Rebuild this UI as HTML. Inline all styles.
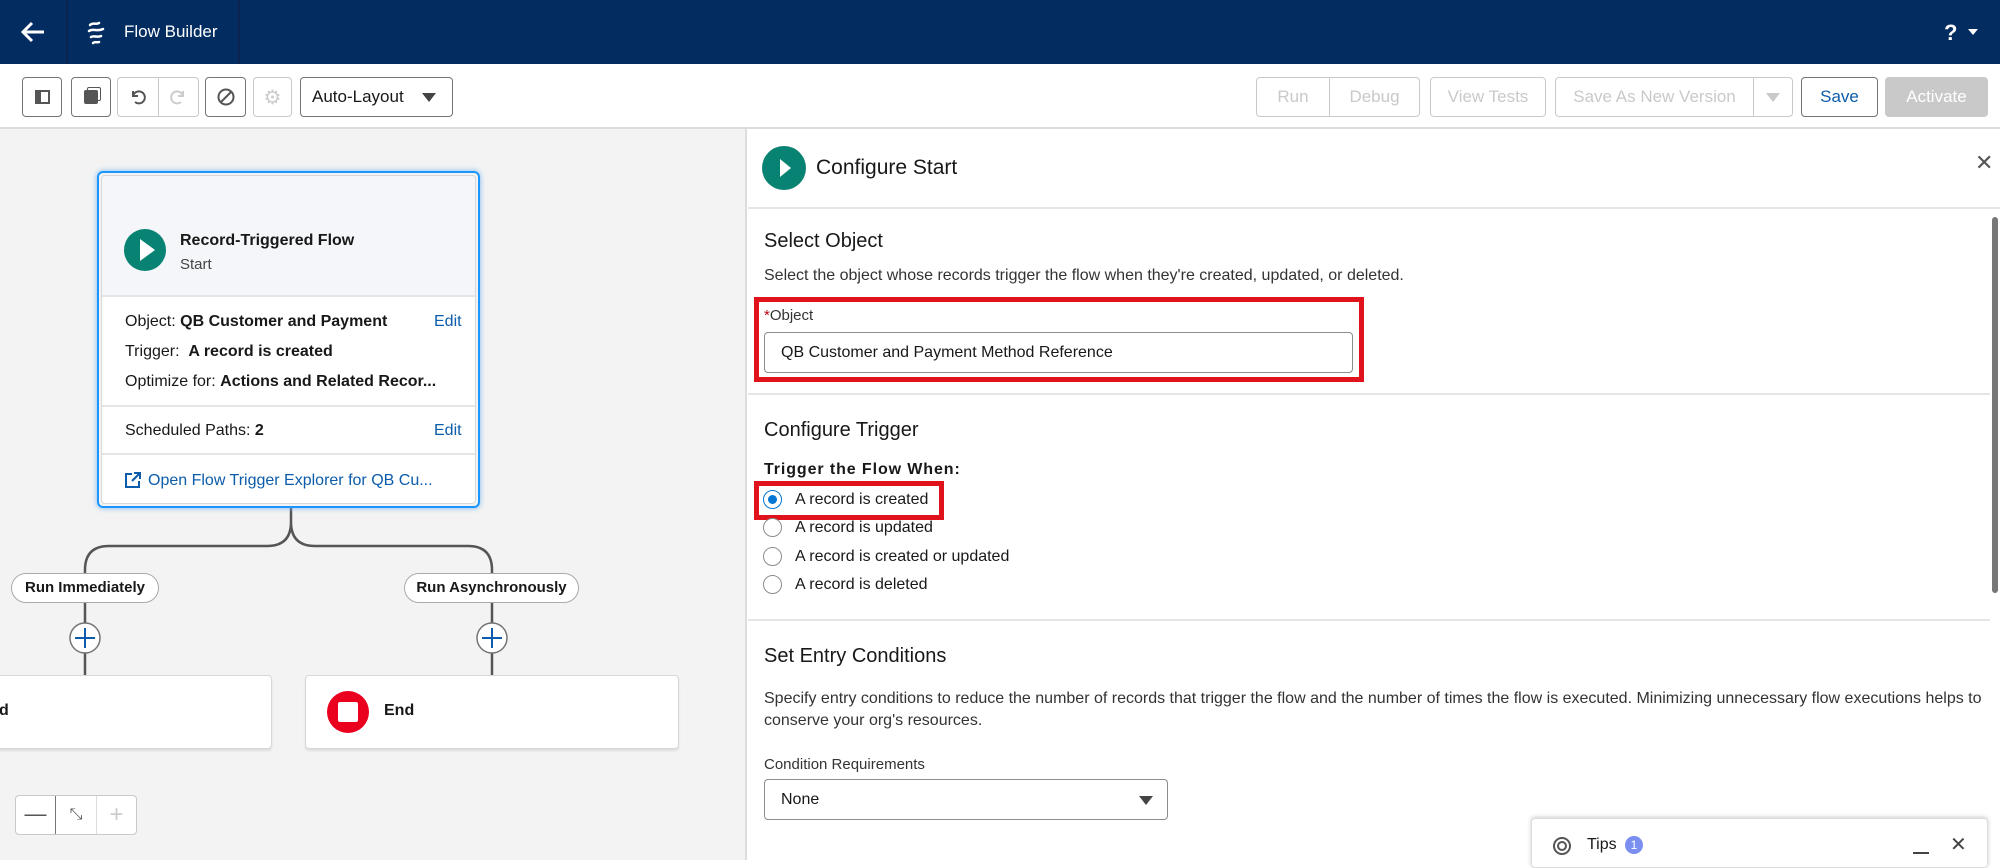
<!DOCTYPE html>
<html><head><meta charset="utf-8"><style>
*{box-sizing:border-box;margin:0;padding:0}
body{width:2000px;height:860px;overflow:hidden;font-family:"Liberation Sans",sans-serif;color:#181818;background:#fff;position:relative}
.a{position:absolute}
.nav{left:0;top:0;width:2000px;height:64px;background:#032d60}
.tb{left:0;top:64px;width:2000px;height:65px;background:#fff;border-bottom:2px solid #dcdcdc}
.btn{position:absolute;top:77px;height:40px;border:1px solid #c9c9c9;border-radius:4px;background:#fff;display:flex;align-items:center;justify-content:center;font-size:17px;color:#c9c9c9}
.canvas{left:0;top:129px;width:747px;height:731px;background:#f3f3f3;border-right:2px solid #dcdcdc}
.card{background:#fff;border:1px solid #d8d8d8;border-radius:4px}
.lbl{font-size:16px}
.panel{left:748px;top:129px;width:1252px;height:731px;background:#fff}
.hr{position:absolute;height:2px;background:#e5e5e5}
.radio{position:absolute;width:19px;height:19px;border:1px solid #8c8c8c;border-radius:50%;background:#fff}
.rl{position:absolute;font-size:16px;color:#181818}
</style></head><body>
<div class="a nav"></div>
<svg class="a" style="left:20px;top:20px" width="26" height="24" viewBox="0 0 26 24"><path d="M24 12H4M12 3L3 12l9 9" stroke="#fff" stroke-width="3" fill="none"/></svg>
<div class="a" style="left:66px;top:0;width:2px;height:64px;background:#0b2550"></div>
<svg class="a" style="left:86px;top:20px" width="22" height="26" viewBox="0 0 22 26"><path d="M4 5c3-3 6 0 9-2M3 11c4-3 8 1 14-2M5 17c3-2 6 1 10-1M7 23c2-2 4 0 6-1" stroke="#fff" stroke-width="2.5" fill="none" stroke-linecap="round"/></svg>
<div class="a" style="left:124px;top:22px;color:#fff;font-size:17px">Flow Builder</div>
<div class="a" style="left:238px;top:0;width:2px;height:64px;background:#0b2550"></div>
<div class="a" style="left:1944px;top:20px;color:#fff;font-size:22px;font-weight:bold">?</div>
<div class="a" style="left:1968px;top:29px;border:5px solid transparent;border-top:6px solid #fff"></div>

<div class="a tb"></div>
<div class="btn" style="left:22px;width:40px;border-color:#747474"><div style="width:15px;height:14px;border:2px solid #555;border-left-width:6px"></div></div>
<div class="btn" style="left:71px;width:40px;border-color:#747474"><div style="width:14px;height:14px;background:#555;border-radius:2px;box-shadow:3px -3px 0 -1px #fff,3px -3px 0 0 #555"></div></div>
<div class="btn" style="left:117px;width:82px;border-color:#c9c9c9;justify-content:flex-start"><div style="width:41px;height:38px;border-right:1px solid #c9c9c9;display:flex;align-items:center;justify-content:center"><svg width="18" height="18" viewBox="0 0 18 18"><path d="M4 3v5h5M4 8a6 6 0 1 1 2 6" stroke="#555" stroke-width="2" fill="none"/></svg></div><div style="width:40px;display:flex;justify-content:center"><svg width="18" height="18" viewBox="0 0 18 18"><path d="M14 3v5H9M14 8a6 6 0 1 0-2 6" stroke="#ccc" stroke-width="2" fill="none"/></svg></div></div>
<div class="btn" style="left:205px;width:41px;border-color:#747474"><svg width="20" height="20" viewBox="0 0 20 20"><circle cx="10" cy="10" r="7.5" stroke="#555" stroke-width="2" fill="none"/><path d="M5 15L15 5" stroke="#555" stroke-width="2"/></svg></div>
<div class="btn" style="left:253px;width:39px;color:#ccc;font-size:20px">⚙</div>
<div class="btn" style="left:300px;width:153px;border-color:#747474;color:#181818;justify-content:flex-start;padding-left:11px">Auto-Layout<div style="margin-left:18px;border:7px solid transparent;border-top:9px solid #444;margin-top:8px"></div></div>
<div class="btn" style="left:1256px;width:164px;justify-content:flex-start"><div style="width:73px;height:38px;border-right:1px solid #c9c9c9;display:flex;align-items:center;justify-content:center">Run</div><div style="flex:1;text-align:center">Debug</div></div>
<div class="btn" style="left:1430px;width:116px">View Tests</div>
<div class="btn" style="left:1555px;width:238px;justify-content:flex-start"><div style="width:198px;height:38px;border-right:1px solid #c9c9c9;display:flex;align-items:center;justify-content:center">Save As New Version</div><div style="flex:1;display:flex;justify-content:center"><div style="border:7px solid transparent;border-top:9px solid #c9c9c9;margin-top:8px"></div></div></div>
<div class="btn" style="left:1801px;width:77px;border-color:#747474;color:#0b5cab">Save</div>
<div class="btn" style="left:1885px;width:103px;background:#c9c9c9;border-color:#c9c9c9;color:#fff">Activate</div>

<div class="a canvas"></div>
<svg class="a" style="left:0;top:500px" width="747" height="180">
<path d="M291 6V22Q291 46 267 46H109Q85 46 85 70V175M291 22Q291 46 315 46H468Q492 46 492 70V175" stroke="#555" stroke-width="2.5" fill="none"/>
<circle cx="85" cy="138" r="15" fill="#fff" stroke="#747474" stroke-width="1.5"/><path d="M85 128v20M75 138h20" stroke="#0b5cab" stroke-width="2"/>
<circle cx="492" cy="138" r="15" fill="#fff" stroke="#747474" stroke-width="1.5"/><path d="M492 128v20M482 138h20" stroke="#0b5cab" stroke-width="2"/>
</svg>
<div class="a" style="left:11px;top:573px;width:148px;height:30px;border:1px solid #aaa;border-radius:15px;background:#fff;font-size:15px;font-weight:bold;text-align:center;line-height:28px">Run Immediately</div>
<div class="a" style="left:404px;top:573px;width:175px;height:30px;border:1px solid #aaa;border-radius:15px;background:#fff;font-size:15px;font-weight:bold;text-align:center;line-height:28px">Run Asynchronously</div>

<div class="a" style="left:97px;top:171px;width:383px;height:337px;border:2px solid #1b96ff;border-radius:6px;box-shadow:0 0 6px #7cb6ef"></div>
<div class="a card" style="left:101px;top:175px;width:375px;height:329px;overflow:hidden">
 <div style="height:121px;background:#f4f6f9;border-bottom:2px solid #e5e5e5;position:relative">
  <div class="a" style="left:22px;top:53px;width:42px;height:42px;border-radius:50%;background:#088373"></div>
  <div class="a" style="left:38px;top:63px;border:11px solid transparent;border-left:15px solid #fff;border-right:0"></div>
  <div class="a" style="left:78px;top:56px;font-size:16px;font-weight:bold">Record-Triggered Flow</div>
  <div class="a" style="left:78px;top:80px;font-size:15px;color:#444">Start</div>
 </div>
 <div class="a lbl" style="left:23px;top:137px">Object: <b>QB Customer and Payment</b></div>
 <div class="a lbl" style="left:332px;top:137px;color:#0b5cab">Edit</div>
 <div class="a lbl" style="left:23px;top:167px">Trigger:&nbsp; <b>A record is created</b></div>
 <div class="a lbl" style="left:23px;top:197px">Optimize for: <b>Actions and Related Recor...</b></div>
 <div class="a" style="left:0;top:229px;width:375px;height:2px;background:#e5e5e5"></div>
 <div class="a lbl" style="left:23px;top:246px">Scheduled Paths: <b>2</b></div>
 <div class="a lbl" style="left:332px;top:246px;color:#0b5cab">Edit</div>
 <div class="a" style="left:0;top:277px;width:375px;height:2px;background:#e5e5e5"></div>
 <svg class="a" style="left:22px;top:295px" width="18" height="18" viewBox="0 0 18 18"><path d="M8 3H2v13h13v-6M10 2h6v6M16 2L8 10" stroke="#0b5cab" stroke-width="2" fill="none"/></svg>
 <div class="a lbl" style="left:46px;top:296px;color:#0b5cab">Open Flow Trigger Explorer for QB Cu...</div>
</div>

<div class="a card" style="left:-4px;top:675px;width:276px;height:74px;box-shadow:0 2px 2px #ddd"><div class="a" style="left:2px;top:26px;font-size:16px;font-weight:bold">d</div></div>
<div class="a card" style="left:305px;top:675px;width:374px;height:74px;box-shadow:0 2px 2px #ddd">
 <div class="a" style="left:21px;top:15px;width:42px;height:42px;border-radius:50%;background:#ea001e"></div>
 <div class="a" style="left:32px;top:26px;width:20px;height:20px;background:#fff;border-radius:2px"></div>
 <div class="a" style="left:78px;top:26px;font-size:16px;font-weight:bold">End</div>
</div>
<div class="a" style="left:15px;top:795px;width:122px;height:40px;border:1px solid #c9c9c9;border-radius:4px;background:#fff;display:flex">
 <div style="width:40px;border-right:1px solid #747474;text-align:center;font-size:22px;line-height:36px;color:#555">—</div>
 <div style="width:41px;border-right:1px solid #ddd;text-align:center;font-size:16px;line-height:38px;color:#555">⤡</div>
 <div style="flex:1;text-align:center;font-size:24px;line-height:38px;color:#ccc">+</div>
</div>

<div class="a panel"></div>
<div class="a" style="left:762px;top:146px;width:44px;height:44px;border-radius:50%;background:#088373"></div>
<div class="a" style="left:780px;top:159px;border:9px solid transparent;border-left:11px solid #fff;border-right:0"></div>
<div class="a" style="left:816px;top:156px;font-size:21px">Configure Start</div>
<div class="a" style="left:1975px;top:150px;font-size:22px;color:#555">✕</div>
<div class="hr" style="left:748px;top:207px;width:1252px"></div>
<div class="a" style="left:1992px;top:217px;width:6px;height:376px;background:#777;border-radius:3px"></div>

<div class="a" style="left:764px;top:230px;font-size:20px">Select Object</div>
<div class="a" style="left:764px;top:267px;font-size:16px;color:#333">Select the object whose records trigger the flow when they're created, updated, or deleted.</div>
<div class="a" style="left:754px;top:297px;width:610px;height:85px;border:5px solid #e0121c"></div>
<div class="a" style="left:764px;top:307px;font-size:15px;color:#333"><span style="color:#ba0517">*</span>Object</div>
<div class="a" style="left:764px;top:332px;width:589px;height:41px;border:1px solid #8c8c8c;border-radius:4px;font-size:16px;line-height:39px;padding-left:16px">QB Customer and Payment Method Reference</div>
<div class="hr" style="left:748px;top:393px;width:1242px"></div>

<div class="a" style="left:764px;top:419px;font-size:20px">Configure Trigger</div>
<div class="a" style="left:764px;top:461px;font-size:16px;font-weight:bold;letter-spacing:0.9px">Trigger the Flow When:</div>
<div class="a" style="left:754px;top:481px;width:190px;height:39px;border:5px solid #e0121c"></div>
<div class="radio" style="left:763px;top:490px;border-color:#0176d3"><div style="margin:4px;width:9px;height:9px;border-radius:50%;background:#0176d3"></div></div>
<div class="rl" style="left:795px;top:491px">A record is created</div>
<div class="radio" style="left:763px;top:518px"></div><div class="rl" style="left:795px;top:519px">A record is updated</div>
<div class="radio" style="left:763px;top:547px"></div><div class="rl" style="left:795px;top:548px">A record is created or updated</div>
<div class="radio" style="left:763px;top:575px"></div><div class="rl" style="left:795px;top:576px">A record is deleted</div>
<div class="hr" style="left:748px;top:619px;width:1242px"></div>

<div class="a" style="left:764px;top:645px;font-size:20px">Set Entry Conditions</div>
<div class="a" style="left:764px;top:688px;width:1232px;font-size:16px;line-height:22px;color:#333">Specify entry conditions to reduce the number of records that trigger the flow and the number of times the flow is executed. Minimizing unnecessary flow executions helps to conserve your org's resources.</div>
<div class="a" style="left:764px;top:756px;font-size:15px;color:#333">Condition Requirements</div>
<div class="a" style="left:764px;top:779px;width:404px;height:41px;border:1px solid #8c8c8c;border-radius:4px;font-size:16px;line-height:39px;padding-left:16px">None<div class="a" style="right:14px;top:16px;border:7px solid transparent;border-top:9px solid #444"></div></div>

<div class="a" style="left:1531px;top:818px;width:457px;height:50px;background:#fff;border:1px solid #ddd;border-radius:4px;box-shadow:0 -1px 4px #ccc"></div>
<svg class="a" style="left:1552px;top:836px" width="20" height="20" viewBox="0 0 20 20"><circle cx="10" cy="10" r="8" stroke="#555" stroke-width="2" fill="none"/><circle cx="10" cy="10" r="4" stroke="#555" stroke-width="2" fill="none"/></svg>
<div class="a" style="left:1587px;top:836px;font-size:16px">Tips</div>
<div class="a" style="left:1625px;top:836px;width:18px;height:18px;border-radius:50%;background:#7b8ff0;color:#fff;font-size:12px;text-align:center;line-height:18px">1</div>
<div class="a" style="left:1913px;top:852px;width:16px;height:2px;background:#444"></div>
<div class="a" style="left:1950px;top:832px;font-size:20px;color:#444">✕</div>
</body></html>
